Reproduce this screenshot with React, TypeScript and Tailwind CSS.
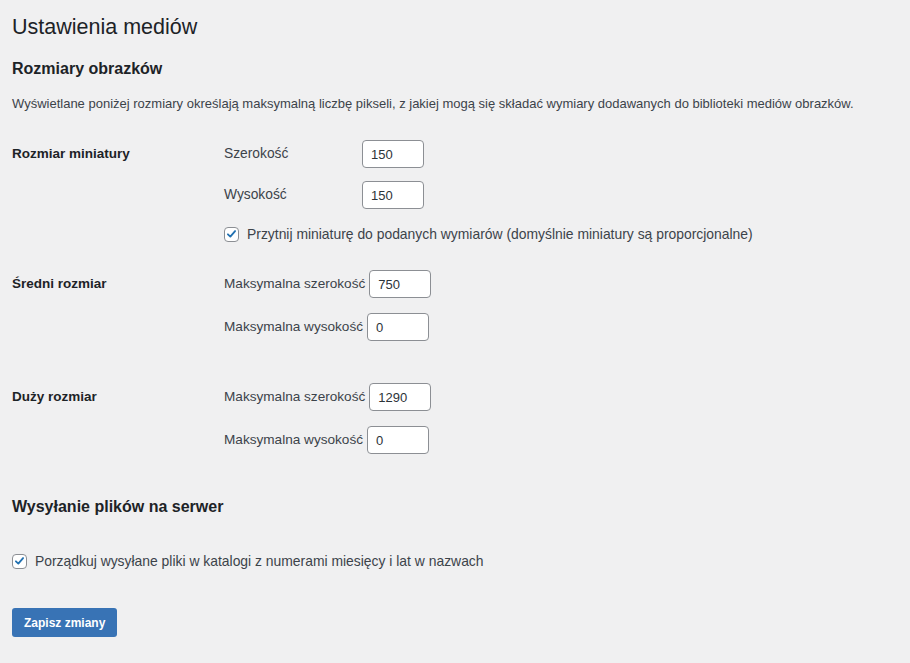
import React from "react";

const font = { fontFamily: '"Liberation Sans", Arial, sans-serif' };

function Check() {
  return (
    <span className="inline-flex h-[15px] w-[15px] shrink-0 items-center justify-center rounded-[4px] border border-[#8c8f94] bg-white">
      <svg viewBox="0 0 20 20" className="h-[14px] w-[14px]">
        <path d="M4.5 10.5 L8.2 14 L15.5 5.5" fill="none" stroke="#2271b1" strokeWidth="2.8" strokeLinecap="round" strokeLinejoin="round" />
      </svg>
    </span>
  );
}

function Input({ value }: { value: string }) {
  return (
    <input
      readOnly
      value={value}
      className="h-[28px] w-[62px] rounded-[4px] border border-[#8c8f94] bg-white px-[8px] text-[13px] text-[#2c3338] outline-none"
      style={font}
    />
  );
}

export default function App() {
  return (
    <div className="min-h-[663px] w-full bg-[#f0f0f1] pl-[12px] text-[#3c434a]" style={font}>
      <h1 className="pt-[13px] text-[21.5px] leading-[28px] text-[#1d2327]">Ustawienia mediów</h1>
      <h2 className="mt-[18px] text-[16px] font-semibold leading-[20px] text-[#1d2327]">Rozmiary obrazków</h2>
      <p className="mt-[16px] text-[13px] leading-[18px] text-[#3c434a]">
        Wyświetlane poniżej rozmiary określają maksymalną liczbę pikseli, z jakiej mogą się składać wymiary dodawanych do biblioteki mediów obrazków.
      </p>

      {/* Rozmiar miniatury */}
      <div className="mt-[27px] flex">
        <div className="w-[212px] pt-[5px] text-[13.5px] font-semibold leading-[18px] text-[#1d2327]">Rozmiar miniatury</div>
        <div className="flex flex-col">
          <div className="flex items-center">
            <span className="w-[138px] text-[13.8px]">Szerokość</span>
            <Input value="150" />
          </div>
          <div className="mt-[13px] flex items-center">
            <span className="w-[138px] text-[13.8px]">Wysokość</span>
            <Input value="150" />
          </div>
          <div className="mt-[16px] flex items-center gap-[8px]">
            <Check />
            <span className="text-[13.9px] leading-[18px]">Przytnij miniaturę do podanych wymiarów (domyślnie miniatury są proporcjonalne)</span>
          </div>
        </div>
      </div>

      {/* Średni rozmiar */}
      <div className="mt-[27px] flex">
        <div className="w-[212px] pt-[5px] text-[13.5px] font-semibold leading-[18px] text-[#1d2327]">Średni rozmiar</div>
        <div className="flex flex-col">
          <div className="flex items-center gap-[4px]">
            <span className="text-[13.6px]">Maksymalna szerokość</span>
            <Input value="750" />
          </div>
          <div className="mt-[15px] flex items-center gap-[4px]">
            <span className="text-[13.6px]">Maksymalna wysokość</span>
            <Input value="0" />
          </div>
        </div>
      </div>

      {/* Duży rozmiar */}
      <div className="mt-[42px] flex">
        <div className="w-[212px] pt-[5px] text-[13.5px] font-semibold leading-[18px] text-[#1d2327]">Duży rozmiar</div>
        <div className="flex flex-col">
          <div className="flex items-center gap-[4px]">
            <span className="text-[13.6px]">Maksymalna szerokość</span>
            <Input value="1290" />
          </div>
          <div className="mt-[15px] flex items-center gap-[4px]">
            <span className="text-[13.6px]">Maksymalna wysokość</span>
            <Input value="0" />
          </div>
        </div>
      </div>

      <h2 className="mt-[43px] text-[16px] font-semibold leading-[20px] text-[#1d2327]">Wysyłanie plików na serwer</h2>

      <div className="mt-[35px] flex items-center gap-[8px]">
        <Check />
        <span className="text-[13.9px] leading-[18px]">Porządkuj wysyłane pliki w katalogi z numerami miesięcy i lat w nazwach</span>
      </div>

      <button className="mt-[38px] h-[29px] rounded-[3px] bg-[#3873b5] px-[12px] text-[12px] font-semibold text-white" style={font}>
        Zapisz zmiany
      </button>
    </div>
  );
}
